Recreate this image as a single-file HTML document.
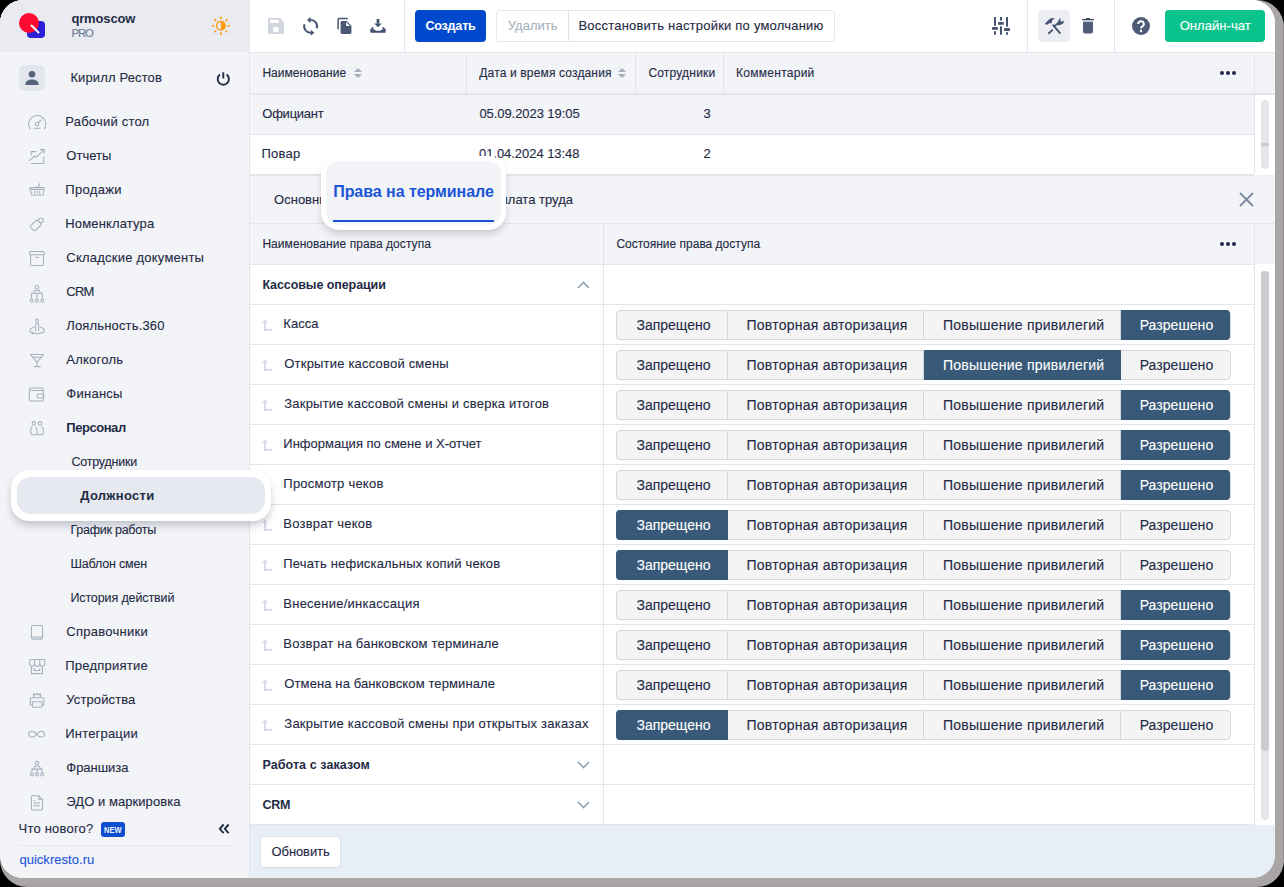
<!DOCTYPE html>
<html><head><meta charset="utf-8"><style>
html,body{margin:0;padding:0;width:1284px;height:887px;overflow:hidden;background:#000}
.shadow{position:absolute;left:0;top:0;width:1284px;height:887px;border-radius:27px;background:linear-gradient(to bottom,#aaa6a6 885px,#a3a0a0 885px)}
.shadow2{position:absolute;left:1283px;top:26px;width:1px;height:834px;background:#8c8989}
.win{position:absolute;left:0;top:0;width:1275px;height:878px;border-radius:23px;overflow:hidden;background:#fff;font-family:"Liberation Sans", sans-serif}
.t{position:absolute;white-space:nowrap;font-family:"Liberation Sans", sans-serif}
.r{position:absolute;display:block}
</style></head><body>
<div class="shadow"></div><div class="shadow2"></div>
<div class="win">
<div class="r" style="left:0px;top:0px;width:249px;height:878px;background:#f3f4f8"></div>
<div class="r" style="left:249px;top:0px;width:1px;height:878px;background:#e3e5ea"></div>
<div class="r" style="left:0px;top:0px;width:249px;height:52px;background:#e9ebf0"></div>
<div class="r" style="left:27px;top:21px;width:18px;height:17px;background:#2a1fd6;border-radius:4px"></div>
<div class="r" style="left:19px;top:13px;width:20px;height:20px;background:#ff0a33;border-radius:50%"></div>
<svg class="r" style="left:30px;top:24px" width="10" height="10" viewBox="0 0 10 10"><line x1="1.5" y1="1.5" x2="8.5" y2="8.5" stroke="#fff" stroke-width="2" stroke-linecap="round"/></svg>
<div class="t" style="left:71.40px;top:11.50px;font-size:13px;line-height:13px;font-weight:700;color:#1f2b45;letter-spacing:-0.143px;">qrmoscow</div>
<div class="t" style="left:71.40px;top:28.16px;font-size:11.4px;line-height:11.4px;font-weight:400;color:#6c7a91;letter-spacing:-1.112px;-webkit-text-stroke:0.12px currentColor;">PRO</div>
<svg class="r" style="left:205px;top:10px" width="32" height="32" viewBox="205 10 32 32"><circle cx="220.9" cy="25.8" r="4.3" fill="none" stroke="#ff9a12" stroke-width="1.5"/><path d="M220.9 21.5 A4.3 4.3 0 0 1 220.9 30.1 Z" fill="#ff9a12"/><g stroke="#ff9a12" stroke-width="1.7" stroke-linecap="round"><line x1="228.30" y1="25.80" x2="229.30" y2="25.80"/><line x1="226.13" y1="31.03" x2="226.84" y2="31.74"/><line x1="220.90" y1="33.20" x2="220.90" y2="34.20"/><line x1="215.67" y1="31.03" x2="214.96" y2="31.74"/><line x1="213.50" y1="25.80" x2="212.50" y2="25.80"/><line x1="215.67" y1="20.57" x2="214.96" y2="19.86"/><line x1="220.90" y1="18.40" x2="220.90" y2="17.40"/><line x1="226.13" y1="20.57" x2="226.84" y2="19.86"/></g></svg>
<div class="r" style="left:19px;top:65px;width:26px;height:26px;background:#e3e6ed;border-radius:5px"></div>
<svg class="r" style="left:19px;top:65px" width="26" height="26" viewBox="0 0 26 26"><circle cx="13" cy="9.3" r="3.3" fill="#56647c"/><path d="M6.3 20 C6.3 16 9.5 14.6 13 14.6 C16.5 14.6 19.7 16 19.7 20 Z" fill="#56647c"/></svg>
<div class="t" style="left:70.40px;top:70.70px;font-size:13px;line-height:13px;font-weight:400;color:#1f2b45;letter-spacing:0.135px;-webkit-text-stroke:0.12px currentColor;">Кирилл Рестов</div>
<svg class="r" style="left:210px;top:65px" width="26" height="26" viewBox="210 65 26 26"><path d="M220 74.6 A5.6 5.6 0 1 0 226.6 74.6" fill="none" stroke="#1f2b45" stroke-width="1.9"/><line x1="223.3" y1="72.3" x2="223.3" y2="78.6" stroke="#1f2b45" stroke-width="1.9"/></svg>
<div class="t" style="left:65.30px;top:115.20px;font-size:13px;line-height:13px;font-weight:400;color:#1f2b45;letter-spacing:0.207px;-webkit-text-stroke:0.12px currentColor;">Рабочий стол</div>
<div class="t" style="left:66.30px;top:149.20px;font-size:13px;line-height:13px;font-weight:400;color:#1f2b45;letter-spacing:0.022px;-webkit-text-stroke:0.12px currentColor;">Отчеты</div>
<div class="t" style="left:65.30px;top:183.20px;font-size:13px;line-height:13px;font-weight:400;color:#1f2b45;letter-spacing:0.328px;-webkit-text-stroke:0.12px currentColor;">Продажи</div>
<div class="t" style="left:65.30px;top:217.20px;font-size:13px;line-height:13px;font-weight:400;color:#1f2b45;letter-spacing:0.144px;-webkit-text-stroke:0.12px currentColor;">Номенклатура</div>
<div class="t" style="left:66.30px;top:251.20px;font-size:13px;line-height:13px;font-weight:400;color:#1f2b45;letter-spacing:0.227px;-webkit-text-stroke:0.12px currentColor;">Складские документы</div>
<div class="t" style="left:66.30px;top:285.20px;font-size:13px;line-height:13px;font-weight:400;color:#1f2b45;letter-spacing:-0.788px;-webkit-text-stroke:0.12px currentColor;">CRM</div>
<div class="t" style="left:66.30px;top:319.20px;font-size:13px;line-height:13px;font-weight:400;color:#1f2b45;letter-spacing:0.156px;-webkit-text-stroke:0.12px currentColor;">Лояльность.360</div>
<div class="t" style="left:66.30px;top:353.20px;font-size:13px;line-height:13px;font-weight:400;color:#1f2b45;letter-spacing:0.242px;-webkit-text-stroke:0.12px currentColor;">Алкоголь</div>
<div class="t" style="left:66.30px;top:387.20px;font-size:13px;line-height:13px;font-weight:400;color:#1f2b45;letter-spacing:0.261px;-webkit-text-stroke:0.12px currentColor;">Финансы</div>
<div class="t" style="left:66.30px;top:421.20px;font-size:13px;line-height:13px;font-weight:700;color:#1f2b45;letter-spacing:-0.453px;">Персонал</div>
<div class="t" style="left:71.40px;top:455.62px;font-size:12.5px;line-height:12.5px;font-weight:400;color:#1f2b45;letter-spacing:-0.214px;-webkit-text-stroke:0.12px currentColor;">Сотрудники</div>
<div class="t" style="left:70.40px;top:523.62px;font-size:12.5px;line-height:12.5px;font-weight:400;color:#1f2b45;letter-spacing:-0.237px;-webkit-text-stroke:0.12px currentColor;">График работы</div>
<div class="t" style="left:70.40px;top:557.62px;font-size:12.5px;line-height:12.5px;font-weight:400;color:#1f2b45;letter-spacing:-0.166px;-webkit-text-stroke:0.12px currentColor;">Шаблон смен</div>
<div class="t" style="left:70.40px;top:591.62px;font-size:12.5px;line-height:12.5px;font-weight:400;color:#1f2b45;letter-spacing:-0.112px;-webkit-text-stroke:0.12px currentColor;">История действий</div>
<div class="t" style="left:66.30px;top:625.20px;font-size:13px;line-height:13px;font-weight:400;color:#1f2b45;letter-spacing:0.271px;-webkit-text-stroke:0.12px currentColor;">Справочники</div>
<div class="t" style="left:65.30px;top:659.20px;font-size:13px;line-height:13px;font-weight:400;color:#1f2b45;letter-spacing:0.231px;-webkit-text-stroke:0.12px currentColor;">Предприятие</div>
<div class="t" style="left:66.30px;top:693.20px;font-size:13px;line-height:13px;font-weight:400;color:#1f2b45;letter-spacing:0.113px;-webkit-text-stroke:0.12px currentColor;">Устройства</div>
<div class="t" style="left:65.30px;top:727.20px;font-size:13px;line-height:13px;font-weight:400;color:#1f2b45;letter-spacing:0.181px;-webkit-text-stroke:0.12px currentColor;">Интеграции</div>
<div class="t" style="left:66.30px;top:761.20px;font-size:13px;line-height:13px;font-weight:400;color:#1f2b45;letter-spacing:-0.039px;-webkit-text-stroke:0.12px currentColor;">Франшиза</div>
<div class="t" style="left:66.30px;top:795.20px;font-size:13px;line-height:13px;font-weight:400;color:#1f2b45;letter-spacing:0.060px;-webkit-text-stroke:0.12px currentColor;">ЭДО и маркировка</div>
<svg class="r" style="left:0;top:0" width="60" height="878" viewBox="0 0 60 878"><g fill="none" stroke="#a6b0bd" stroke-width="1.05" stroke-linejoin="round">
<path d="M30.3 129.3 A8.6 8.6 0 1 1 44.1 129.3"/>
<circle cx="37.2" cy="124" r="1.7"/><path d="M38.5 122.7 L41.3 119.7"/><path d="M33.8 128.3 H40.6"/>
<path d="M31.2 155.5 V151.6 H36.4"/><path d="M31.2 163.4 H43.8 V156.6"/><path d="M29.1 160.8 L34.7 156 L36.2 157.4 L44 149.8"/><path d="M40 149.6 H44.2 V153.8"/>
<path d="M37.2 188 L40 183.2"/><rect x="29.6" y="187.6" width="14.7" height="1.9" rx="0.9"/><path d="M30.6 189.8 L31.6 195 H43.1 L44 189.8"/><path d="M34.7 190.8 V193.6 M37.2 190.8 V193.6 M39.7 190.8 V193.6"/>
<path d="M38.6 221 L36.8 220.3 Q36.3 220.2 35.9 220.6 L30.6 225.9 Q30 226.6 30.6 227.3 L33.9 230.6 Q34.6 231.2 35.3 230.6 L40.6 225.3 Q41 224.9 40.9 224.4 L40.4 222.8"/><circle cx="40.9" cy="220.3" r="2.4"/>
<rect x="29.6" y="251.4" width="14.7" height="3.3" rx="1"/><path d="M30.6 254.7 V264.2 A1.2 1.2 0 0 0 31.8 265.4 H42.3 A1.2 1.2 0 0 0 43.5 264.2 V254.7"/><path d="M35.2 257.5 H38.9"/>
<circle cx="37" cy="287.2" r="1.8"/><path d="M33.3 293.3 L34.8 290.4 H39.2 L40.7 293.3 M31.6 299.3 V293.3 H42.3 V299.3 M37 293.3 V299.3"/><circle cx="31.6" cy="300.8" r="1.5"/><circle cx="37" cy="300.8" r="1.5"/><circle cx="42.3" cy="300.8" r="1.5"/>
<circle cx="37.1" cy="320.5" r="1.5"/><path d="M35.6 331 V324.6 Q35.6 323.2 37.1 323.2 Q38.6 323.2 38.6 324.6 V331"/><path d="M34.5 327 Q30 328 30 330.5 Q30 333.5 37.1 333.5 Q44.2 333.5 44.2 330.5 Q44.2 328 39.7 327"/><path d="M33.3 332.2 L32 334.5"/>
<path d="M30.4 354.5 H43.6 L37.1 362.3 Z"/><path d="M32.8 357.3 H41"/><path d="M37.1 362.3 V366.6 M33.6 366.6 H40.6"/>
<rect x="29.3" y="388" width="14" height="13" rx="1.5"/><path d="M30.2 390.5 H42.4"/><rect x="37.2" y="394.3" width="6.6" height="3.6" rx="1"/>
<circle cx="33.9" cy="423.4" r="1.8"/><circle cx="40" cy="423.4" r="1.8"/><path d="M32.4 427 Q30.5 427.5 30.7 431 L31.5 434.7 H36.4"/><path d="M35.4 427 Q37 427.4 37 430 V434.7 H42.6 L43.4 431 Q43.6 427.5 41.6 427"/>
<rect x="31.4" y="625.5" width="11.2" height="13.6" rx="1.8"/><path d="M32.4 637.1 H42.6"/>
<path d="M30.2 659.4 H44.5 L45 663.5 Q44.5 666.3 42.4 666.3 Q40.2 666.3 39.8 663.6 Q39.4 666.3 37.2 666.3 Q35 666.3 34.6 663.6 Q34.2 666.3 32 666.3 Q29.8 666.3 29.5 663.5 Z"/><path d="M34.5 659.4 V663.6 M39.8 659.4 V663.6"/><path d="M31.5 666.5 V673.6 H42.5 V666.5"/><path d="M34.2 667.8 V670.4 H39.8 V667.8"/>
<path d="M33.6 697.5 V693.6 L35.3 695 L37 693.4 L38.7 695 L40.4 693.4 V697.5"/><path d="M32.4 704.9 H30.3 V698.6 Q30.3 697.8 31.1 697.8 H43 Q43.8 697.8 43.8 698.6 V704.9 H41.8"/><rect x="32.4" y="701.8" width="9.6" height="5.4" rx="0.8"/>
<path d="M36.6 734.2 C34 730.5 28.7 730.2 28.7 734.2 C28.7 738.2 34 737.9 36.6 734.2 C39.2 730.5 44.5 730.2 44.5 734.2 C44.5 738.2 39.2 737.9 36.6 734.2 Z"/>
<circle cx="37" cy="763" r="1.8"/><path d="M33.3 769.1 L34.8 766.2 H39.2 L40.7 769.1 M31.9 773 V769.1 H42.1 V773 M37 769.1 V773"/><circle cx="31.9" cy="774.5" r="1.5"/><circle cx="37" cy="774.5" r="1.5"/><circle cx="42.1" cy="774.5" r="1.5"/>
<path d="M38.8 795.8 H32.8 Q31.4 795.8 31.4 797.2 V808.5 Q31.4 809.9 32.8 809.9 H41.1 Q42.5 809.9 42.5 808.5 V799.5 Z"/><path d="M38.8 795.8 V799.5 H42.5"/><path d="M33.7 800.5 H35 M33.7 803 H40 M33.7 805.7 H40"/>
</g></svg>
<div class="t" style="left:18.60px;top:821.70px;font-size:13px;line-height:13px;font-weight:400;color:#1f2b45;letter-spacing:0.200px;-webkit-text-stroke:0.12px currentColor;">Что нового?</div>
<div class="r" style="left:101px;top:822px;width:24px;height:15px;background:#0d4fd0;border-radius:3px"></div>
<div class="t" style="left:104.00px;top:825.92px;font-size:8.6px;line-height:8.6px;font-weight:700;color:#eef3ff;transform:scaleX(0.87);transform-origin:0 0">NEW</div>
<svg class="r" style="left:218px;top:823px" width="13" height="12" viewBox="0 0 13 12"><path d="M5.6 1.5 L1.8 5.8 L5.6 10.1 M10.6 1.5 L6.8 5.8 L10.6 10.1" fill="none" stroke="#1f2b45" stroke-width="1.9"/></svg>
<div class="r" style="left:19px;top:845px;width:216px;height:1px;background:#e3e6eb"></div>
<div class="t" style="left:19.40px;top:852.50px;font-size:13px;line-height:13px;font-weight:400;color:#1d55d8;letter-spacing:0.034px;-webkit-text-stroke:0.12px currentColor;">quickresto.ru</div>
<div class="r" style="left:250px;top:0px;width:1025px;height:52px;background:#fff"></div>
<div class="r" style="left:250px;top:52px;width:1025px;height:1px;background:#e3e5ea"></div>
<div class="r" style="left:404px;top:0px;width:1px;height:52px;background:#e3e5ea"></div>
<div class="r" style="left:1027px;top:0px;width:1px;height:52px;background:#e3e5ea"></div>
<div class="r" style="left:1114px;top:0px;width:1px;height:52px;background:#e3e5ea"></div>
<svg class="r" style="left:260px;top:10px" width="140" height="32" viewBox="260 10 140 32"><path d="M269.3 18.1 H280.2 L283.9 21.8 V32.6 Q283.9 33.9 282.6 33.9 H269.3 Q268 33.9 268 32.6 V19.4 Q268 18.1 269.3 18.1 Z" fill="#d1d5de"/><rect x="269.8" y="19.8" width="9" height="3.3" rx="1.4" fill="#fff"/><circle cx="275.9" cy="29.6" r="3" fill="#fff"/><g fill="none" stroke="#44536f" stroke-width="1.9"><path d="M310.3 19.9 A6.4 6.4 0 0 1 316.7 28.4"/><path d="M304.5 24.2 A6.4 6.4 0 0 0 311 32.7"/></g><g fill="#44536f"><path d="M307 19.9 L310.6 16.9 V22.9 Z"/><path d="M314.4 32.7 L310.8 29.7 V35.7 Z"/></g><path d="M338.1 29.6 V19.6 Q338.1 18.5 339.2 18.5 H347.8" fill="none" stroke="#44536f" stroke-width="1.45"/><path d="M342.1 21.1 H346.7 L351.4 25.8 V32.6 Q351.4 34 350 34 H342 Q340.6 34 340.6 32.6 V22.5 Q340.6 21.1 342.1 21.1 Z" fill="#4a5874"/><path d="M346.1 22.1 V26.1 H350.1 Z" fill="#fff"/><g fill="#44536f"><rect x="376.6" y="19" width="2.8" height="4.6"/><path d="M374.2 23.4 H381.8 L378 27.2 Z"/><path d="M370.3 29.6 L372.4 27 L374 27.9 L372.8 29.6 H374.8 L375.8 30.8 H380.6 L381.6 29.6 H383.3 L382.1 27.9 L383.7 27 L385.7 29.6 V32 Q385.7 32.8 384.9 32.8 H371.1 Q370.3 32.8 370.3 32 Z"/></g></svg>
<div class="r" style="left:415px;top:10px;width:71px;height:32px;background:#0049cc;border-radius:4px"></div>
<div class="t" style="left:425.40px;top:20.24px;font-size:12.6px;line-height:12.6px;font-weight:700;color:#fff;letter-spacing:-0.225px;">Создать</div>
<div class="r" style="left:496px;top:10px;width:339px;height:32px;background:#fff;border:1px solid #e3e6ea;border-radius:4px;box-sizing:border-box"></div>
<div class="r" style="left:568px;top:10px;width:1px;height:32px;background:#e0e3e8"></div>
<div class="t" style="left:507.80px;top:19.00px;font-size:13px;line-height:13px;font-weight:400;color:#a6b1c1;letter-spacing:0.023px;-webkit-text-stroke:0.12px currentColor;">Удалить</div>
<div class="t" style="left:578.40px;top:19.00px;font-size:13px;line-height:13px;font-weight:400;color:#1f2b45;letter-spacing:0.216px;-webkit-text-stroke:0.12px currentColor;">Восстановить настройки по умолчанию</div>
<svg class="r" style="left:980px;top:0" width="130" height="52" viewBox="980 0 130 52"><g fill="#44536f"><rect x="994" y="16.9" width="2" height="8.9" rx="0.4"/><rect x="992" y="27" width="5.9" height="2.8" rx="0.4"/><rect x="994" y="31" width="2" height="3.8" rx="0.4"/><rect x="1000" y="16.9" width="2" height="3.7" rx="0.4"/><rect x="998" y="22" width="5.8" height="2.8" rx="0.4"/><rect x="1000" y="26.2" width="2" height="8.6" rx="0.4"/><rect x="1006" y="16.9" width="2" height="9.8" rx="0.4"/><rect x="1004.1" y="28.1" width="5.8" height="2.8" rx="0.4"/><rect x="1006" y="32.1" width="2" height="2.7" rx="0.4"/></g></svg>
<div class="r" style="left:1038px;top:10px;width:32px;height:32px;background:#eceef3;border-radius:4px"></div>
<svg class="r" style="left:1040px;top:12px" width="30" height="28" viewBox="1040 12 30 28"><g fill="#44536f"><path d="M1045 23.4 L1049.3 19.3 Q1051.5 17.6 1054.8 18.3 Q1052.4 19.5 1052 21 L1051.7 22.6 L1050.5 23.8 L1049.5 23 L1046.7 25 Z"/><path d="M1057.2 23.9 L1058.3 21.2 Q1058.6 19 1060.5 18.1 L1060.3 20.6 L1061.4 21.8 L1063.7 20.4 Q1063.9 23.7 1061.3 24.5 L1058.6 25.5 Z"/></g><g stroke="#44536f" stroke-width="1.9" stroke-linecap="butt"><path d="M1052.7 24.6 L1060.4 33.7"/><path d="M1052.7 29.6 L1048.3 33.7"/><path d="M1054.2 26.6 L1058.2 22.9"/></g></svg>
<svg class="r" style="left:1078px;top:14px" width="22" height="24" viewBox="1078 14 22 24"><path d="M1082.3 18.9 H1093.7 Q1094.2 19.5 1093.7 20.2 H1082.3 Q1081.8 19.5 1082.3 18.9 Z" fill="#3f4e6c"/><path d="M1085.3 18.9 Q1085.8 18 1087 18 H1089 Q1090.2 18 1090.6 18.9 Z" fill="#3f4e6c"/><rect x="1082.8" y="20.2" width="10.4" height="1.7" fill="#b9bfcb"/><path d="M1083 22 H1093 V31.5 Q1093 33.6 1090.9 33.6 H1085.1 Q1083 33.6 1083 31.5 Z" fill="#4f5d79"/></svg>
<svg class="r" style="left:1132px;top:17px" width="18" height="18" viewBox="0 0 18 18"><circle cx="9" cy="9" r="9" fill="#4e5b77"/><path d="M6.2 7 A2.8 2.8 0 1 1 10 9.6 C9 10 9 10.6 9 11.4" fill="none" stroke="#fff" stroke-width="2"/><circle cx="9" cy="14" r="1.2" fill="#fff"/></svg>
<div class="r" style="left:1165px;top:10px;width:100px;height:32px;background:#0bc48d;border-radius:4px"></div>
<div class="t" style="left:1179.70px;top:19.00px;font-size:13px;line-height:13px;font-weight:400;color:#fff;letter-spacing:0.045px;-webkit-text-stroke:0.12px currentColor;">Онлайн-чат</div>
<div class="r" style="left:250px;top:53px;width:1025px;height:40px;background:#f3f4f8"></div>
<div class="r" style="left:250px;top:93px;width:1025px;height:2px;background:#e3e5ea"></div>
<div class="t" style="left:262.40px;top:67.25px;font-size:12px;line-height:12px;font-weight:400;color:#1f2b45;letter-spacing:0.044px;-webkit-text-stroke:0.12px currentColor;">Наименование</div>
<div class="t" style="left:479.30px;top:67.25px;font-size:12px;line-height:12px;font-weight:400;color:#1f2b45;letter-spacing:0.152px;-webkit-text-stroke:0.12px currentColor;">Дата и время создания</div>
<div class="t" style="left:648.40px;top:67.25px;font-size:12px;line-height:12px;font-weight:400;color:#1f2b45;letter-spacing:0.201px;-webkit-text-stroke:0.12px currentColor;">Сотрудники</div>
<div class="t" style="left:736.10px;top:67.25px;font-size:12px;line-height:12px;font-weight:400;color:#1f2b45;letter-spacing:0.262px;-webkit-text-stroke:0.12px currentColor;">Комментарий</div>
<svg class="r" style="left:354px;top:67px" width="8" height="12" viewBox="0 0 8 12"><path d="M0 4.9 L4 0.9 L8 4.9 Z M0 7 L4 11 L8 7 Z" fill="#a6aebb"/></svg>
<svg class="r" style="left:618px;top:67px" width="8" height="12" viewBox="0 0 8 12"><path d="M0 4.9 L4 0.9 L8 4.9 Z M0 7 L4 11 L8 7 Z" fill="#a6aebb"/></svg>
<div class="r" style="left:1220px;top:71px;width:4px;height:4px;background:#1f2b45;border-radius:50%"></div>
<div class="r" style="left:1226px;top:71px;width:4px;height:4px;background:#1f2b45;border-radius:50%"></div>
<div class="r" style="left:1232px;top:71px;width:4px;height:4px;background:#1f2b45;border-radius:50%"></div>
<div class="r" style="left:466px;top:53px;width:1px;height:121px;background:#e3e5ea"></div>
<div class="r" style="left:635px;top:53px;width:1px;height:121px;background:#e3e5ea"></div>
<div class="r" style="left:723px;top:53px;width:1px;height:121px;background:#e3e5ea"></div>
<div class="r" style="left:1254px;top:53px;width:1px;height:121px;background:#e3e5ea"></div>
<div class="r" style="left:250px;top:95px;width:1004px;height:39px;background:#f3f4f8"></div>
<div class="r" style="left:250px;top:134px;width:1004px;height:1px;background:#e3e5ea"></div>
<div class="r" style="left:250px;top:135px;width:1004px;height:39px;background:#fff"></div>
<div class="r" style="left:1255px;top:95px;width:20px;height:81px;background:#fff"></div>
<div class="r" style="left:1261px;top:100px;width:8px;height:69px;background:#e4e6eb;border-radius:4px"></div>
<div class="r" style="left:1261px;top:142.6px;width:8px;height:3px;background:#caccd2"></div>
<div class="t" style="left:262.30px;top:106.90px;font-size:13px;line-height:13px;font-weight:400;color:#1f2b45;letter-spacing:-0.241px;-webkit-text-stroke:0.12px currentColor;">Официант</div>
<div class="t" style="left:479.40px;top:106.90px;font-size:13px;line-height:13px;font-weight:400;color:#1f2b45;letter-spacing:-0.065px;-webkit-text-stroke:0.12px currentColor;">05.09.2023 19:05</div>
<div class="t" style="left:703.50px;top:106.90px;font-size:13px;line-height:13px;font-weight:400;color:#1f2b45;-webkit-text-stroke:0.12px currentColor;">3</div>
<div class="t" style="left:261.40px;top:146.90px;font-size:13px;line-height:13px;font-weight:400;color:#1f2b45;letter-spacing:0.259px;-webkit-text-stroke:0.12px currentColor;">Повар</div>
<div class="t" style="left:479.00px;top:146.90px;font-size:13px;line-height:13px;font-weight:400;color:#1f2b45;letter-spacing:-0.045px;-webkit-text-stroke:0.12px currentColor;">01.04.2024 13:48</div>
<div class="t" style="left:703.50px;top:146.90px;font-size:13px;line-height:13px;font-weight:400;color:#1f2b45;-webkit-text-stroke:0.12px currentColor;">2</div>
<div class="r" style="left:250px;top:176px;width:1025px;height:48px;background:#f3f4f8"></div>
<div class="r" style="left:250px;top:174px;width:1004px;height:2px;background:#e3e5ea"></div>
<div class="r" style="left:1255px;top:175px;width:20px;height:1px;background:#eceef2"></div>
<div class="r" style="left:250px;top:223px;width:1025px;height:1px;background:#e3e5ea"></div>
<div class="t" style="left:274.10px;top:193.00px;font-size:13px;line-height:13px;font-weight:400;color:#1f2b45;-webkit-text-stroke:0.12px currentColor;">Основные</div>
<div class="t" style="left:490.70px;top:193.00px;font-size:13px;line-height:13px;font-weight:400;color:#1f2b45;-webkit-text-stroke:0.12px currentColor;">Оплата труда</div>
<svg class="r" style="left:1239px;top:192px" width="15" height="15" viewBox="0 0 15 15"><path d="M1 1 L14 14 M14 1 L1 14" stroke="#7b8d9e" stroke-width="1.8"/></svg>
<div class="r" style="left:250px;top:224px;width:1025px;height:40px;background:#f3f4f8"></div>
<div class="r" style="left:250px;top:264px;width:1005px;height:1px;background:#e3e5ea"></div>
<div class="t" style="left:262.40px;top:237.85px;font-size:12px;line-height:12px;font-weight:400;color:#1f2b45;letter-spacing:0.055px;-webkit-text-stroke:0.12px currentColor;">Наименование права доступа</div>
<div class="t" style="left:616.40px;top:237.85px;font-size:12px;line-height:12px;font-weight:400;color:#1f2b45;letter-spacing:-0.005px;-webkit-text-stroke:0.12px currentColor;">Состояние права доступа</div>
<div class="r" style="left:1220px;top:241.5px;width:4px;height:4px;background:#1f2b45;border-radius:50%"></div>
<div class="r" style="left:1226px;top:241.5px;width:4px;height:4px;background:#1f2b45;border-radius:50%"></div>
<div class="r" style="left:1232px;top:241.5px;width:4px;height:4px;background:#1f2b45;border-radius:50%"></div>
<div class="r" style="left:250px;top:265px;width:1005px;height:560px;background:#fff"></div>
<div class="r" style="left:603px;top:224px;width:1px;height:601px;background:#e3e5ea"></div>
<div class="r" style="left:1254px;top:224px;width:1px;height:601px;background:#e3e5ea"></div>
<div class="r" style="left:1255px;top:265px;width:20px;height:560px;background:#fff"></div>
<div class="r" style="left:1261px;top:271px;width:8px;height:549px;background:#e4e6eb;border-radius:4px"></div>
<div class="r" style="left:1261px;top:271px;width:8px;height:480px;background:#caccd2;border-radius:4px"></div>
<div class="r" style="left:250px;top:304px;width:1005px;height:1px;background:#e3e5ea"></div>
<div class="t" style="left:262.40px;top:279.03px;font-size:12.5px;line-height:12.5px;font-weight:700;color:#1f2b45;letter-spacing:-0.084px;">Кассовые операции</div>
<svg class="r" style="left:577px;top:281px" width="13" height="8" viewBox="0 0 13 8"><path d="M1 7 L6.5 1.5 L12 7" fill="none" stroke="#8da3b3" stroke-width="1.6"/></svg>
<div class="r" style="left:250px;top:344px;width:1005px;height:1px;background:#e3e5ea"></div>
<svg class="r" style="left:262px;top:319px" width="11" height="12" viewBox="0 0 11 12"><path d="M0 3.7 L3 0.5 L6 3.7 Z" fill="#d3d9e3"/><rect x="2.1" y="3.6" width="1.9" height="8.2" fill="#d3d9e3"/><rect x="2.1" y="9.9" width="7.8" height="1.9" fill="#d3d9e3"/></svg>
<div class="t" style="left:283.30px;top:316.60px;font-size:13px;line-height:13px;font-weight:400;color:#1f2b45;letter-spacing:0.024px;-webkit-text-stroke:0.12px currentColor;">Касса</div>
<div class="r" style="left:616px;top:310px;width:614.5px;height:30px;background:#f4f4f5;border:1px solid #d3d9de;border-radius:4px;box-sizing:border-box"></div>
<div class="r" style="left:727.1px;top:310px;width:1px;height:30px;background:#d3d9de"></div>
<div class="r" style="left:923.4px;top:310px;width:1px;height:30px;background:#d3d9de"></div>
<div class="r" style="left:1120.3px;top:310px;width:1px;height:30px;background:#d3d9de"></div>
<div class="r" style="left:1120.8px;top:310px;width:109.7px;height:30px;background:#385978;border-radius:0 4px 4px 0"></div>
<div class="t" style="left:636.50px;top:318.16px;font-size:14px;line-height:14px;font-weight:400;color:#1f2b45;letter-spacing:-0.009px;-webkit-text-stroke:0.12px currentColor;">Запрещено</div>
<div class="t" style="left:746.50px;top:318.16px;font-size:14px;line-height:14px;font-weight:400;color:#1f2b45;letter-spacing:0.240px;-webkit-text-stroke:0.12px currentColor;">Повторная авторизация</div>
<div class="t" style="left:943.00px;top:318.16px;font-size:14px;line-height:14px;font-weight:400;color:#1f2b45;letter-spacing:0.230px;-webkit-text-stroke:0.12px currentColor;">Повышение привилегий</div>
<div class="t" style="left:1139.70px;top:318.16px;font-size:14px;line-height:14px;font-weight:400;color:#fff;letter-spacing:0.057px;-webkit-text-stroke:0.12px currentColor;">Разрешено</div>
<div class="r" style="left:250px;top:384px;width:1005px;height:1px;background:#e3e5ea"></div>
<svg class="r" style="left:262px;top:359px" width="11" height="12" viewBox="0 0 11 12"><path d="M0 3.7 L3 0.5 L6 3.7 Z" fill="#d3d9e3"/><rect x="2.1" y="3.6" width="1.9" height="8.2" fill="#d3d9e3"/><rect x="2.1" y="9.9" width="7.8" height="1.9" fill="#d3d9e3"/></svg>
<div class="t" style="left:284.30px;top:356.60px;font-size:13px;line-height:13px;font-weight:400;color:#1f2b45;letter-spacing:0.197px;-webkit-text-stroke:0.12px currentColor;">Открытие кассовой смены</div>
<div class="r" style="left:616px;top:350px;width:614.5px;height:30px;background:#f4f4f5;border:1px solid #d3d9de;border-radius:4px;box-sizing:border-box"></div>
<div class="r" style="left:727.1px;top:350px;width:1px;height:30px;background:#d3d9de"></div>
<div class="r" style="left:923.4px;top:350px;width:1px;height:30px;background:#d3d9de"></div>
<div class="r" style="left:1120.3px;top:350px;width:1px;height:30px;background:#d3d9de"></div>
<div class="r" style="left:923.9px;top:350px;width:196.9px;height:30px;background:#385978;border-radius:0"></div>
<div class="t" style="left:636.50px;top:358.16px;font-size:14px;line-height:14px;font-weight:400;color:#1f2b45;letter-spacing:-0.009px;-webkit-text-stroke:0.12px currentColor;">Запрещено</div>
<div class="t" style="left:746.50px;top:358.16px;font-size:14px;line-height:14px;font-weight:400;color:#1f2b45;letter-spacing:0.240px;-webkit-text-stroke:0.12px currentColor;">Повторная авторизация</div>
<div class="t" style="left:943.00px;top:358.16px;font-size:14px;line-height:14px;font-weight:400;color:#fff;letter-spacing:0.230px;-webkit-text-stroke:0.12px currentColor;">Повышение привилегий</div>
<div class="t" style="left:1139.70px;top:358.16px;font-size:14px;line-height:14px;font-weight:400;color:#1f2b45;letter-spacing:0.057px;-webkit-text-stroke:0.12px currentColor;">Разрешено</div>
<div class="r" style="left:250px;top:424px;width:1005px;height:1px;background:#e3e5ea"></div>
<svg class="r" style="left:262px;top:399px" width="11" height="12" viewBox="0 0 11 12"><path d="M0 3.7 L3 0.5 L6 3.7 Z" fill="#d3d9e3"/><rect x="2.1" y="3.6" width="1.9" height="8.2" fill="#d3d9e3"/><rect x="2.1" y="9.9" width="7.8" height="1.9" fill="#d3d9e3"/></svg>
<div class="t" style="left:284.30px;top:396.60px;font-size:13px;line-height:13px;font-weight:400;color:#1f2b45;letter-spacing:0.204px;-webkit-text-stroke:0.12px currentColor;">Закрытие кассовой смены и сверка итогов</div>
<div class="r" style="left:616px;top:390px;width:614.5px;height:30px;background:#f4f4f5;border:1px solid #d3d9de;border-radius:4px;box-sizing:border-box"></div>
<div class="r" style="left:727.1px;top:390px;width:1px;height:30px;background:#d3d9de"></div>
<div class="r" style="left:923.4px;top:390px;width:1px;height:30px;background:#d3d9de"></div>
<div class="r" style="left:1120.3px;top:390px;width:1px;height:30px;background:#d3d9de"></div>
<div class="r" style="left:1120.8px;top:390px;width:109.7px;height:30px;background:#385978;border-radius:0 4px 4px 0"></div>
<div class="t" style="left:636.50px;top:398.16px;font-size:14px;line-height:14px;font-weight:400;color:#1f2b45;letter-spacing:-0.009px;-webkit-text-stroke:0.12px currentColor;">Запрещено</div>
<div class="t" style="left:746.50px;top:398.16px;font-size:14px;line-height:14px;font-weight:400;color:#1f2b45;letter-spacing:0.240px;-webkit-text-stroke:0.12px currentColor;">Повторная авторизация</div>
<div class="t" style="left:943.00px;top:398.16px;font-size:14px;line-height:14px;font-weight:400;color:#1f2b45;letter-spacing:0.230px;-webkit-text-stroke:0.12px currentColor;">Повышение привилегий</div>
<div class="t" style="left:1139.70px;top:398.16px;font-size:14px;line-height:14px;font-weight:400;color:#fff;letter-spacing:0.057px;-webkit-text-stroke:0.12px currentColor;">Разрешено</div>
<div class="r" style="left:250px;top:464px;width:1005px;height:1px;background:#e3e5ea"></div>
<svg class="r" style="left:262px;top:439px" width="11" height="12" viewBox="0 0 11 12"><path d="M0 3.7 L3 0.5 L6 3.7 Z" fill="#d3d9e3"/><rect x="2.1" y="3.6" width="1.9" height="8.2" fill="#d3d9e3"/><rect x="2.1" y="9.9" width="7.8" height="1.9" fill="#d3d9e3"/></svg>
<div class="t" style="left:283.30px;top:436.60px;font-size:13px;line-height:13px;font-weight:400;color:#1f2b45;letter-spacing:0.003px;-webkit-text-stroke:0.12px currentColor;">Информация по смене и X-отчет</div>
<div class="r" style="left:616px;top:430px;width:614.5px;height:30px;background:#f4f4f5;border:1px solid #d3d9de;border-radius:4px;box-sizing:border-box"></div>
<div class="r" style="left:727.1px;top:430px;width:1px;height:30px;background:#d3d9de"></div>
<div class="r" style="left:923.4px;top:430px;width:1px;height:30px;background:#d3d9de"></div>
<div class="r" style="left:1120.3px;top:430px;width:1px;height:30px;background:#d3d9de"></div>
<div class="r" style="left:1120.8px;top:430px;width:109.7px;height:30px;background:#385978;border-radius:0 4px 4px 0"></div>
<div class="t" style="left:636.50px;top:438.16px;font-size:14px;line-height:14px;font-weight:400;color:#1f2b45;letter-spacing:-0.009px;-webkit-text-stroke:0.12px currentColor;">Запрещено</div>
<div class="t" style="left:746.50px;top:438.16px;font-size:14px;line-height:14px;font-weight:400;color:#1f2b45;letter-spacing:0.240px;-webkit-text-stroke:0.12px currentColor;">Повторная авторизация</div>
<div class="t" style="left:943.00px;top:438.16px;font-size:14px;line-height:14px;font-weight:400;color:#1f2b45;letter-spacing:0.230px;-webkit-text-stroke:0.12px currentColor;">Повышение привилегий</div>
<div class="t" style="left:1139.70px;top:438.16px;font-size:14px;line-height:14px;font-weight:400;color:#fff;letter-spacing:0.057px;-webkit-text-stroke:0.12px currentColor;">Разрешено</div>
<div class="r" style="left:250px;top:504px;width:1005px;height:1px;background:#e3e5ea"></div>
<svg class="r" style="left:262px;top:479px" width="11" height="12" viewBox="0 0 11 12"><path d="M0 3.7 L3 0.5 L6 3.7 Z" fill="#d3d9e3"/><rect x="2.1" y="3.6" width="1.9" height="8.2" fill="#d3d9e3"/><rect x="2.1" y="9.9" width="7.8" height="1.9" fill="#d3d9e3"/></svg>
<div class="t" style="left:283.30px;top:476.60px;font-size:13px;line-height:13px;font-weight:400;color:#1f2b45;letter-spacing:0.235px;-webkit-text-stroke:0.12px currentColor;">Просмотр чеков</div>
<div class="r" style="left:616px;top:470px;width:614.5px;height:30px;background:#f4f4f5;border:1px solid #d3d9de;border-radius:4px;box-sizing:border-box"></div>
<div class="r" style="left:727.1px;top:470px;width:1px;height:30px;background:#d3d9de"></div>
<div class="r" style="left:923.4px;top:470px;width:1px;height:30px;background:#d3d9de"></div>
<div class="r" style="left:1120.3px;top:470px;width:1px;height:30px;background:#d3d9de"></div>
<div class="r" style="left:1120.8px;top:470px;width:109.7px;height:30px;background:#385978;border-radius:0 4px 4px 0"></div>
<div class="t" style="left:636.50px;top:478.16px;font-size:14px;line-height:14px;font-weight:400;color:#1f2b45;letter-spacing:-0.009px;-webkit-text-stroke:0.12px currentColor;">Запрещено</div>
<div class="t" style="left:746.50px;top:478.16px;font-size:14px;line-height:14px;font-weight:400;color:#1f2b45;letter-spacing:0.240px;-webkit-text-stroke:0.12px currentColor;">Повторная авторизация</div>
<div class="t" style="left:943.00px;top:478.16px;font-size:14px;line-height:14px;font-weight:400;color:#1f2b45;letter-spacing:0.230px;-webkit-text-stroke:0.12px currentColor;">Повышение привилегий</div>
<div class="t" style="left:1139.70px;top:478.16px;font-size:14px;line-height:14px;font-weight:400;color:#fff;letter-spacing:0.057px;-webkit-text-stroke:0.12px currentColor;">Разрешено</div>
<div class="r" style="left:250px;top:544px;width:1005px;height:1px;background:#e3e5ea"></div>
<svg class="r" style="left:262px;top:519px" width="11" height="12" viewBox="0 0 11 12"><path d="M0 3.7 L3 0.5 L6 3.7 Z" fill="#d3d9e3"/><rect x="2.1" y="3.6" width="1.9" height="8.2" fill="#d3d9e3"/><rect x="2.1" y="9.9" width="7.8" height="1.9" fill="#d3d9e3"/></svg>
<div class="t" style="left:283.30px;top:516.60px;font-size:13px;line-height:13px;font-weight:400;color:#1f2b45;letter-spacing:0.206px;-webkit-text-stroke:0.12px currentColor;">Возврат чеков</div>
<div class="r" style="left:616px;top:510px;width:614.5px;height:30px;background:#f4f4f5;border:1px solid #d3d9de;border-radius:4px;box-sizing:border-box"></div>
<div class="r" style="left:727.1px;top:510px;width:1px;height:30px;background:#d3d9de"></div>
<div class="r" style="left:923.4px;top:510px;width:1px;height:30px;background:#d3d9de"></div>
<div class="r" style="left:1120.3px;top:510px;width:1px;height:30px;background:#d3d9de"></div>
<div class="r" style="left:616px;top:510px;width:111.6px;height:30px;background:#385978;border-radius:4px 0 0 4px"></div>
<div class="t" style="left:636.50px;top:518.16px;font-size:14px;line-height:14px;font-weight:400;color:#fff;letter-spacing:-0.009px;-webkit-text-stroke:0.12px currentColor;">Запрещено</div>
<div class="t" style="left:746.50px;top:518.16px;font-size:14px;line-height:14px;font-weight:400;color:#1f2b45;letter-spacing:0.240px;-webkit-text-stroke:0.12px currentColor;">Повторная авторизация</div>
<div class="t" style="left:943.00px;top:518.16px;font-size:14px;line-height:14px;font-weight:400;color:#1f2b45;letter-spacing:0.230px;-webkit-text-stroke:0.12px currentColor;">Повышение привилегий</div>
<div class="t" style="left:1139.70px;top:518.16px;font-size:14px;line-height:14px;font-weight:400;color:#1f2b45;letter-spacing:0.057px;-webkit-text-stroke:0.12px currentColor;">Разрешено</div>
<div class="r" style="left:250px;top:584px;width:1005px;height:1px;background:#e3e5ea"></div>
<svg class="r" style="left:262px;top:559px" width="11" height="12" viewBox="0 0 11 12"><path d="M0 3.7 L3 0.5 L6 3.7 Z" fill="#d3d9e3"/><rect x="2.1" y="3.6" width="1.9" height="8.2" fill="#d3d9e3"/><rect x="2.1" y="9.9" width="7.8" height="1.9" fill="#d3d9e3"/></svg>
<div class="t" style="left:283.30px;top:556.60px;font-size:13px;line-height:13px;font-weight:400;color:#1f2b45;letter-spacing:0.178px;-webkit-text-stroke:0.12px currentColor;">Печать нефискальных копий чеков</div>
<div class="r" style="left:616px;top:550px;width:614.5px;height:30px;background:#f4f4f5;border:1px solid #d3d9de;border-radius:4px;box-sizing:border-box"></div>
<div class="r" style="left:727.1px;top:550px;width:1px;height:30px;background:#d3d9de"></div>
<div class="r" style="left:923.4px;top:550px;width:1px;height:30px;background:#d3d9de"></div>
<div class="r" style="left:1120.3px;top:550px;width:1px;height:30px;background:#d3d9de"></div>
<div class="r" style="left:616px;top:550px;width:111.6px;height:30px;background:#385978;border-radius:4px 0 0 4px"></div>
<div class="t" style="left:636.50px;top:558.16px;font-size:14px;line-height:14px;font-weight:400;color:#fff;letter-spacing:-0.009px;-webkit-text-stroke:0.12px currentColor;">Запрещено</div>
<div class="t" style="left:746.50px;top:558.16px;font-size:14px;line-height:14px;font-weight:400;color:#1f2b45;letter-spacing:0.240px;-webkit-text-stroke:0.12px currentColor;">Повторная авторизация</div>
<div class="t" style="left:943.00px;top:558.16px;font-size:14px;line-height:14px;font-weight:400;color:#1f2b45;letter-spacing:0.230px;-webkit-text-stroke:0.12px currentColor;">Повышение привилегий</div>
<div class="t" style="left:1139.70px;top:558.16px;font-size:14px;line-height:14px;font-weight:400;color:#1f2b45;letter-spacing:0.057px;-webkit-text-stroke:0.12px currentColor;">Разрешено</div>
<div class="r" style="left:250px;top:624px;width:1005px;height:1px;background:#e3e5ea"></div>
<svg class="r" style="left:262px;top:599px" width="11" height="12" viewBox="0 0 11 12"><path d="M0 3.7 L3 0.5 L6 3.7 Z" fill="#d3d9e3"/><rect x="2.1" y="3.6" width="1.9" height="8.2" fill="#d3d9e3"/><rect x="2.1" y="9.9" width="7.8" height="1.9" fill="#d3d9e3"/></svg>
<div class="t" style="left:283.30px;top:596.60px;font-size:13px;line-height:13px;font-weight:400;color:#1f2b45;letter-spacing:0.246px;-webkit-text-stroke:0.12px currentColor;">Внесение/инкассация</div>
<div class="r" style="left:616px;top:590px;width:614.5px;height:30px;background:#f4f4f5;border:1px solid #d3d9de;border-radius:4px;box-sizing:border-box"></div>
<div class="r" style="left:727.1px;top:590px;width:1px;height:30px;background:#d3d9de"></div>
<div class="r" style="left:923.4px;top:590px;width:1px;height:30px;background:#d3d9de"></div>
<div class="r" style="left:1120.3px;top:590px;width:1px;height:30px;background:#d3d9de"></div>
<div class="r" style="left:1120.8px;top:590px;width:109.7px;height:30px;background:#385978;border-radius:0 4px 4px 0"></div>
<div class="t" style="left:636.50px;top:598.16px;font-size:14px;line-height:14px;font-weight:400;color:#1f2b45;letter-spacing:-0.009px;-webkit-text-stroke:0.12px currentColor;">Запрещено</div>
<div class="t" style="left:746.50px;top:598.16px;font-size:14px;line-height:14px;font-weight:400;color:#1f2b45;letter-spacing:0.240px;-webkit-text-stroke:0.12px currentColor;">Повторная авторизация</div>
<div class="t" style="left:943.00px;top:598.16px;font-size:14px;line-height:14px;font-weight:400;color:#1f2b45;letter-spacing:0.230px;-webkit-text-stroke:0.12px currentColor;">Повышение привилегий</div>
<div class="t" style="left:1139.70px;top:598.16px;font-size:14px;line-height:14px;font-weight:400;color:#fff;letter-spacing:0.057px;-webkit-text-stroke:0.12px currentColor;">Разрешено</div>
<div class="r" style="left:250px;top:664px;width:1005px;height:1px;background:#e3e5ea"></div>
<svg class="r" style="left:262px;top:639px" width="11" height="12" viewBox="0 0 11 12"><path d="M0 3.7 L3 0.5 L6 3.7 Z" fill="#d3d9e3"/><rect x="2.1" y="3.6" width="1.9" height="8.2" fill="#d3d9e3"/><rect x="2.1" y="9.9" width="7.8" height="1.9" fill="#d3d9e3"/></svg>
<div class="t" style="left:283.30px;top:636.60px;font-size:13px;line-height:13px;font-weight:400;color:#1f2b45;letter-spacing:0.199px;-webkit-text-stroke:0.12px currentColor;">Возврат на банковском терминале</div>
<div class="r" style="left:616px;top:630px;width:614.5px;height:30px;background:#f4f4f5;border:1px solid #d3d9de;border-radius:4px;box-sizing:border-box"></div>
<div class="r" style="left:727.1px;top:630px;width:1px;height:30px;background:#d3d9de"></div>
<div class="r" style="left:923.4px;top:630px;width:1px;height:30px;background:#d3d9de"></div>
<div class="r" style="left:1120.3px;top:630px;width:1px;height:30px;background:#d3d9de"></div>
<div class="r" style="left:1120.8px;top:630px;width:109.7px;height:30px;background:#385978;border-radius:0 4px 4px 0"></div>
<div class="t" style="left:636.50px;top:638.16px;font-size:14px;line-height:14px;font-weight:400;color:#1f2b45;letter-spacing:-0.009px;-webkit-text-stroke:0.12px currentColor;">Запрещено</div>
<div class="t" style="left:746.50px;top:638.16px;font-size:14px;line-height:14px;font-weight:400;color:#1f2b45;letter-spacing:0.240px;-webkit-text-stroke:0.12px currentColor;">Повторная авторизация</div>
<div class="t" style="left:943.00px;top:638.16px;font-size:14px;line-height:14px;font-weight:400;color:#1f2b45;letter-spacing:0.230px;-webkit-text-stroke:0.12px currentColor;">Повышение привилегий</div>
<div class="t" style="left:1139.70px;top:638.16px;font-size:14px;line-height:14px;font-weight:400;color:#fff;letter-spacing:0.057px;-webkit-text-stroke:0.12px currentColor;">Разрешено</div>
<div class="r" style="left:250px;top:704px;width:1005px;height:1px;background:#e3e5ea"></div>
<svg class="r" style="left:262px;top:679px" width="11" height="12" viewBox="0 0 11 12"><path d="M0 3.7 L3 0.5 L6 3.7 Z" fill="#d3d9e3"/><rect x="2.1" y="3.6" width="1.9" height="8.2" fill="#d3d9e3"/><rect x="2.1" y="9.9" width="7.8" height="1.9" fill="#d3d9e3"/></svg>
<div class="t" style="left:284.30px;top:676.60px;font-size:13px;line-height:13px;font-weight:400;color:#1f2b45;letter-spacing:0.113px;-webkit-text-stroke:0.12px currentColor;">Отмена на банковском терминале</div>
<div class="r" style="left:616px;top:670px;width:614.5px;height:30px;background:#f4f4f5;border:1px solid #d3d9de;border-radius:4px;box-sizing:border-box"></div>
<div class="r" style="left:727.1px;top:670px;width:1px;height:30px;background:#d3d9de"></div>
<div class="r" style="left:923.4px;top:670px;width:1px;height:30px;background:#d3d9de"></div>
<div class="r" style="left:1120.3px;top:670px;width:1px;height:30px;background:#d3d9de"></div>
<div class="r" style="left:1120.8px;top:670px;width:109.7px;height:30px;background:#385978;border-radius:0 4px 4px 0"></div>
<div class="t" style="left:636.50px;top:678.16px;font-size:14px;line-height:14px;font-weight:400;color:#1f2b45;letter-spacing:-0.009px;-webkit-text-stroke:0.12px currentColor;">Запрещено</div>
<div class="t" style="left:746.50px;top:678.16px;font-size:14px;line-height:14px;font-weight:400;color:#1f2b45;letter-spacing:0.240px;-webkit-text-stroke:0.12px currentColor;">Повторная авторизация</div>
<div class="t" style="left:943.00px;top:678.16px;font-size:14px;line-height:14px;font-weight:400;color:#1f2b45;letter-spacing:0.230px;-webkit-text-stroke:0.12px currentColor;">Повышение привилегий</div>
<div class="t" style="left:1139.70px;top:678.16px;font-size:14px;line-height:14px;font-weight:400;color:#fff;letter-spacing:0.057px;-webkit-text-stroke:0.12px currentColor;">Разрешено</div>
<div class="r" style="left:250px;top:744px;width:1005px;height:1px;background:#e3e5ea"></div>
<svg class="r" style="left:262px;top:719px" width="11" height="12" viewBox="0 0 11 12"><path d="M0 3.7 L3 0.5 L6 3.7 Z" fill="#d3d9e3"/><rect x="2.1" y="3.6" width="1.9" height="8.2" fill="#d3d9e3"/><rect x="2.1" y="9.9" width="7.8" height="1.9" fill="#d3d9e3"/></svg>
<div class="t" style="left:284.30px;top:716.60px;font-size:13px;line-height:13px;font-weight:400;color:#1f2b45;letter-spacing:0.228px;-webkit-text-stroke:0.12px currentColor;">Закрытие кассовой смены при открытых заказах</div>
<div class="r" style="left:616px;top:710px;width:614.5px;height:30px;background:#f4f4f5;border:1px solid #d3d9de;border-radius:4px;box-sizing:border-box"></div>
<div class="r" style="left:727.1px;top:710px;width:1px;height:30px;background:#d3d9de"></div>
<div class="r" style="left:923.4px;top:710px;width:1px;height:30px;background:#d3d9de"></div>
<div class="r" style="left:1120.3px;top:710px;width:1px;height:30px;background:#d3d9de"></div>
<div class="r" style="left:616px;top:710px;width:111.6px;height:30px;background:#385978;border-radius:4px 0 0 4px"></div>
<div class="t" style="left:636.50px;top:718.16px;font-size:14px;line-height:14px;font-weight:400;color:#fff;letter-spacing:-0.009px;-webkit-text-stroke:0.12px currentColor;">Запрещено</div>
<div class="t" style="left:746.50px;top:718.16px;font-size:14px;line-height:14px;font-weight:400;color:#1f2b45;letter-spacing:0.240px;-webkit-text-stroke:0.12px currentColor;">Повторная авторизация</div>
<div class="t" style="left:943.00px;top:718.16px;font-size:14px;line-height:14px;font-weight:400;color:#1f2b45;letter-spacing:0.230px;-webkit-text-stroke:0.12px currentColor;">Повышение привилегий</div>
<div class="t" style="left:1139.70px;top:718.16px;font-size:14px;line-height:14px;font-weight:400;color:#1f2b45;letter-spacing:0.057px;-webkit-text-stroke:0.12px currentColor;">Разрешено</div>
<div class="r" style="left:250px;top:784px;width:1005px;height:1px;background:#e3e5ea"></div>
<div class="t" style="left:262.40px;top:759.02px;font-size:12.5px;line-height:12.5px;font-weight:700;color:#1f2b45;letter-spacing:0.088px;">Работа с заказом</div>
<svg class="r" style="left:577px;top:761px" width="13" height="8" viewBox="0 0 13 8"><path d="M1 1 L6.5 6.5 L12 1" fill="none" stroke="#8da3b3" stroke-width="1.6"/></svg>
<div class="r" style="left:250px;top:824px;width:1005px;height:1px;background:#e3e5ea"></div>
<div class="t" style="left:262.40px;top:799.02px;font-size:12.5px;line-height:12.5px;font-weight:700;color:#1f2b45;letter-spacing:-0.177px;">CRM</div>
<svg class="r" style="left:577px;top:801px" width="13" height="8" viewBox="0 0 13 8"><path d="M1 1 L6.5 6.5 L12 1" fill="none" stroke="#8da3b3" stroke-width="1.6"/></svg>
<div class="r" style="left:250px;top:825px;width:1025px;height:53px;background:#e7eef6"></div>
<div class="r" style="left:261px;top:837px;width:79px;height:30px;background:#fff;border-radius:3px;box-shadow:0 0 0 1px rgba(40,50,70,0.05),0 1px 1px rgba(40,50,70,0.06)"></div>
<div class="t" style="left:271.60px;top:844.80px;font-size:13px;line-height:13px;font-weight:400;color:#1f2b45;letter-spacing:-0.113px;-webkit-text-stroke:0.12px currentColor;">Обновить</div>
<div class="r" style="left:11px;top:470px;width:260px;height:51px;background:#fff;border-radius:18px;box-shadow:0 5px 8px -1px rgba(30,40,60,0.25)"></div>
<div class="r" style="left:17px;top:476.6px;width:248px;height:37.8px;background:#e6e9f0;border-radius:14px"></div>
<div class="t" style="left:80.20px;top:489.20px;font-size:13px;line-height:13px;font-weight:700;color:#1f2b45;letter-spacing:0.284px;">Должности</div>
<div class="r" style="left:321px;top:156px;width:185px;height:74px;background:#fff;border-radius:18px;box-shadow:0 5px 8px -2px rgba(30,40,60,0.25)"></div>
<div class="r" style="left:326px;top:161px;width:175px;height:63.6px;background:#f3f4f8;border-radius:13px"></div>
<div class="t" style="left:333.20px;top:184.26px;font-size:16px;line-height:16px;font-weight:700;color:#1a55d6;letter-spacing:-0.049px;">Права на терминале</div>
<div class="r" style="left:333px;top:219.5px;width:161px;height:2px;background:#1a55d6"></div>
</div>
</body></html>
